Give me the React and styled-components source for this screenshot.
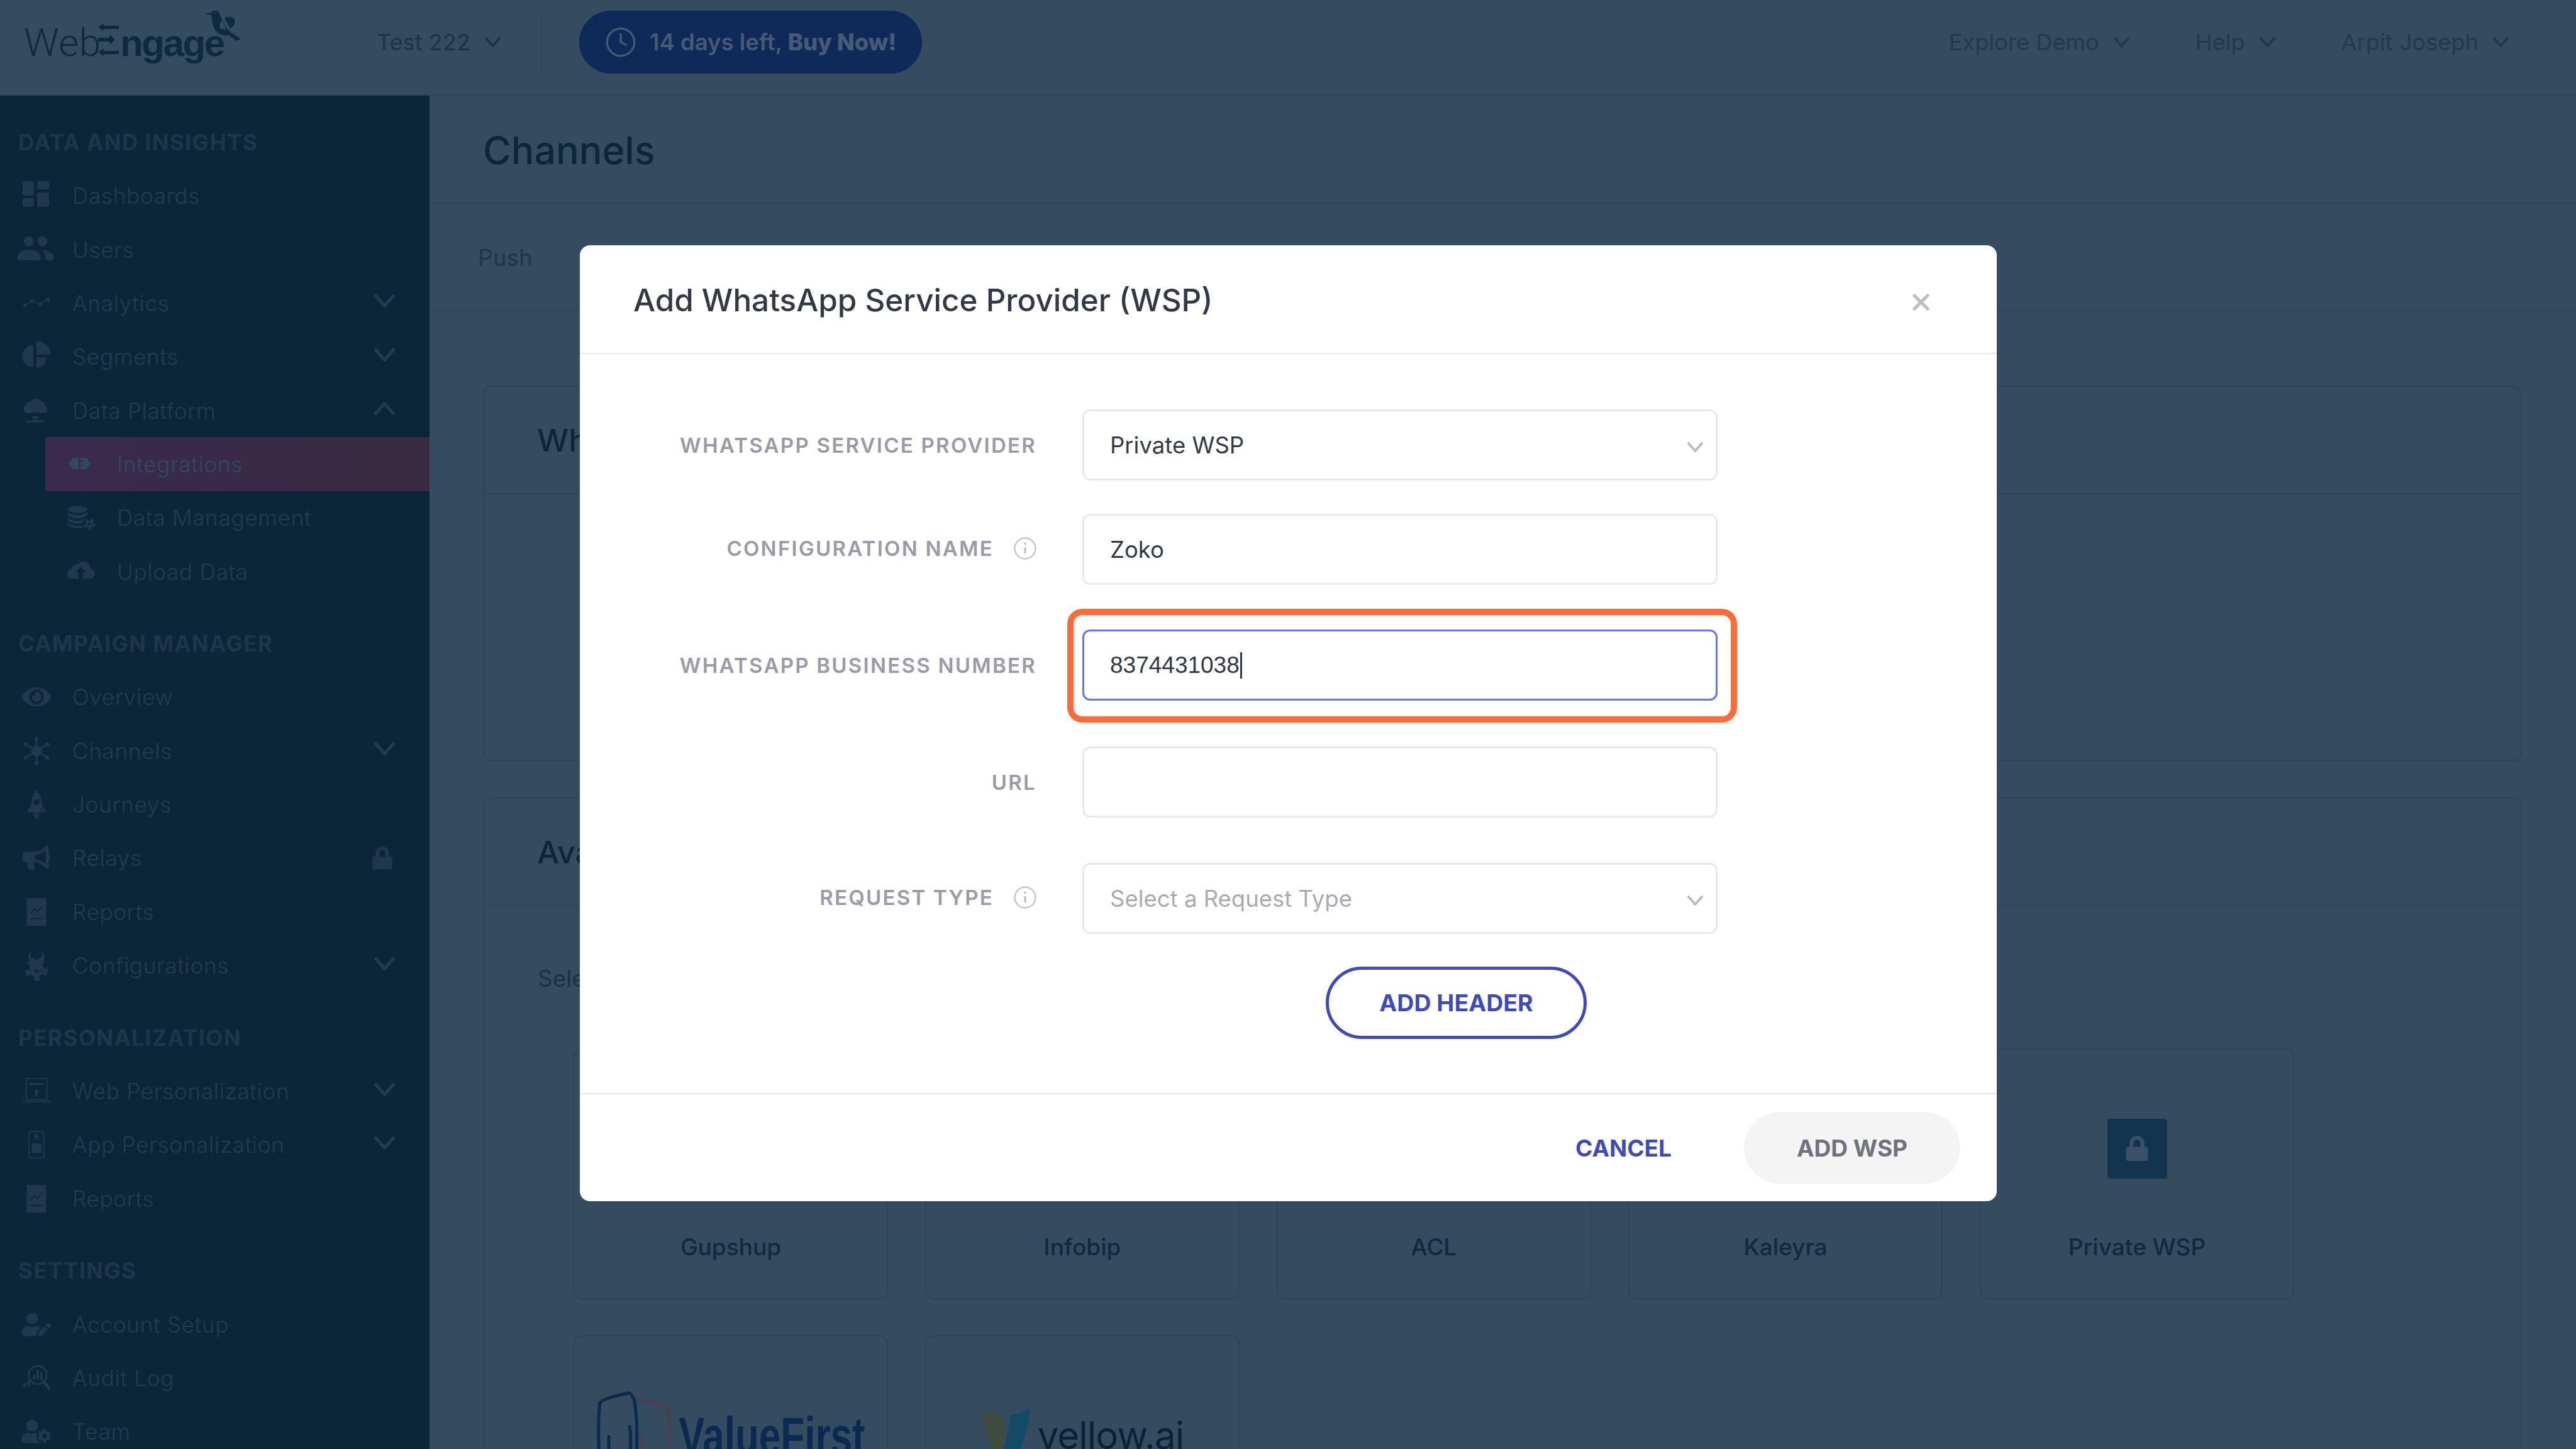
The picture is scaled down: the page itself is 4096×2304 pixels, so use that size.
import React from "react";
import styled, { createGlobalStyle } from "styled-components";
import { Clock } from "lucide-react";
import { FaBullhorn, FaEye, FaLock, FaUserCog, FaUserEdit } from "react-icons/fa";

const GlobalStyle = createGlobalStyle`
  html, body {
    margin: 0;
    padding: 0;
    background: #354b60;
    font-family: Inter, "Noto Sans", sans-serif;
  }
  * { box-sizing: border-box; }
`;

const Page = styled.div`
  position: relative;
  width: 4096px;
  height: 2304px;
  overflow: hidden;
  background: #354b60;
  display: flex;
  flex-direction: column;
`;

/* top bar */
const TopBar = styled.header`
  height: 152px;
  flex: none;
  display: flex;
  align-items: center;
  padding: 0 107px 16px 0;
  border-bottom: 2px solid #2f4458;
`;

const Logo = styled.div`
  position: relative;
  width: 599px;
  height: 152px;
  padding: 36px 0 0 38px;
  display: flex;
  align-items: baseline;
  align-self: flex-start;
  flex: none;
  color: #0e2a3e;
  line-height: 64px;
`;

const LogoLight = styled.span`
  width: 111px;
  font-family: Roboto, sans-serif;
  font-weight: 300;
  font-size: 62px;
  letter-spacing: 0.5px;
`;

const LogoBold = styled.span`
  font-family: "Liberation Sans", sans-serif;
  font-weight: 700;
  font-size: 60px;
  letter-spacing: -2.4px;
`;

const LogoArrows = styled.svg`
  width: 33px;
  height: 52px;
  margin: 0 2px -3px 7px;
`;

const LogoBird = styled.svg`
  position: absolute;
  left: 326px;
  top: 16px;
  width: 58px;
  height: 50px;
`;

const TopMenu = styled.div`
  display: flex;
  align-items: center;
  gap: 23px;
  font-size: 36px;
  letter-spacing: 0.1px;
  color: ${(p) => p.$color || "#24394e"};
  margin-left: ${(p) => p.$left || 0}px;
`;

const Divider = styled.div`
  width: 2px;
  height: 100px;
  background: #31465a;
  margin-left: 64px;
`;

const TrialPill = styled.div`
  height: 100px;
  width: 545px;
  margin-left: 59px;
  display: flex;
  align-items: center;
  gap: 20px;
  padding-left: 40px;
  border-radius: 50px;
  background: #0f2a59;
  color: #465a76;
  font-size: 36.5px;
  font-weight: 600;
  white-space: nowrap;
  b { font-weight: 800; }
`;

const Spacer = styled.div`
  flex: 1;
`;

const ChevronSvg = styled.svg`
  width: ${(p) => p.$w || 25}px;
  height: ${(p) => Math.round((p.$w || 25) * 0.64)}px;
  flex: none;
  fill: none;
  stroke: ${(p) => p.$color || "currentColor"};
  stroke-width: 4;
  stroke-linecap: round;
  stroke-linejoin: round;
`;

const Chevron = ({ up, w, color, className }) => (
  <ChevronSvg viewBox="0 0 25 16" $w={w} $color={color} className={className}>
    <polyline points={up ? "2,14 12.5,2 23,14" : "2,2 12.5,14 23,2"} />
  </ChevronSvg>
);

/* layout */
const Body = styled.div`
  flex: 1;
  display: flex;
  min-height: 0;
`;

const Sidebar = styled.nav`
  width: 683px;
  flex: none;
  padding-top: 2px;
  background: #0c2639;
  overflow: hidden;
`;

const NavSection = styled.div`
  margin-top: 29.6px;
`;

const NavTitle = styled.div`
  height: 85px;
  padding-left: 29px;
  display: flex;
  align-items: center;
  color: #1f354b;
  font-size: 35px;
  font-weight: 700;
  letter-spacing: 1.5px;
`;

const NavRow = styled.div`
  height: 85.33px;
  display: flex;
  align-items: center;
  margin-left: ${(p) => (p.$sub ? 72 : 0)}px;
  padding: 0 ${(p) => (p.$sub ? 0 : 55)}px 0 ${(p) => (p.$sub ? 34 : 35)}px;
  color: ${(p) => (p.$active ? "#2f4b62" : "#253a50")};
  background: ${(p) => (p.$active ? "linear-gradient(90deg, #3a2a4e, #382b42)" : "none")};
  font-size: 35px;
  font-weight: 300;
  letter-spacing: 0.75px;
`;

const NavIcon = styled.span`
  width: 46px;
  height: 46px;
  margin-right: 34px;
  flex: none;
  display: flex;
  align-items: center;
  justify-content: center;
  color: ${(p) => (p.$active ? "#2f4b62" : "#20374d")};
  svg { display: block; fill: currentColor; overflow: visible; }
`;

const NavEnd = styled.span`
  margin-left: auto;
  display: flex;
  color: #253a50;
  transform: translateY(-3px);
`;

const NavLock = styled.span`
  margin-left: auto;
  margin-right: 2px;
  display: flex;
  color: #20374d;
`;

const Gear = ({ cx, cy, r }) => (
  <>
    <circle cx={cx} cy={cy} r={r * 0.72} />
    <circle cx={cx} cy={cy} r={r * 0.9} fill="none" stroke="currentColor" strokeWidth={r * 0.4} strokeDasharray={`${r * 0.55} ${r * 0.55}`} />
    <circle cx={cx} cy={cy} r={r * 0.3} fill="#0c2639" />
  </>
);

const Icon48 = ({ children }) => (
  <svg viewBox="0 0 48 48" width="46" height="46">
    {children}
  </svg>
);

const Icon46 = ({ children }) => (
  <svg viewBox="0 0 46 46" width="46" height="46">
    {children}
  </svg>
);

const icons = {
  dashboard: (
    <Icon46>
      <rect x="1" y="0" width="18" height="23" rx="3" />
      <rect x="24" y="0" width="19" height="13" rx="3" />
      <rect x="1" y="27" width="18" height="14" rx="3" />
      <rect x="24" y="18" width="19" height="23" rx="3" />
    </Icon46>
  ),
  users: (
    <Icon46>
      <circle cx="10.7" cy="9.7" r="8" />
      <circle cx="32.3" cy="9.7" r="8" />
      <path d="M-8 36c0-8 9-13 19-13s19 5 19 13c0 2-2 4-4 4H-4c-2 0-4-2-4-4z" />
      <path d="M31 23c12 1 20 6 20 13 0 2-2 4-4 4h-8c-1 0-2-1-2-2 0-7-1-11-6-15z" />
    </Icon46>
  ),
  analytics: (
    <Icon46>
      <polyline points="5,26.3 15.5,20 28.8,24.6 41.5,17.3" fill="none" stroke="currentColor" strokeWidth="1.5" />
      <circle cx="5" cy="26.3" r="3" />
      <circle cx="15.5" cy="20" r="3" />
      <circle cx="28.8" cy="24.6" r="3" />
      <circle cx="41.5" cy="17.3" r="3" />
    </Icon46>
  ),
  segments: (
    <Icon46>
      <path d="M18 5a17.5 17.5 0 0 0 0 35z" />
      <path d="M23-2a22 22 0 0 1 22 22H23z" />
      <path d="M23 24.5h16a16 16 0 0 1-16 16z" />
    </Icon46>
  ),
  platform: (
    <Icon46>
      <path d="M8 27a7 7 0 0 1-2-13 7 7 0 0 1 9-5 9 9 0 0 1 16-1 8 8 0 0 1 6 8 6 6 0 0 1 0 11z" />
      <rect x="16.5" y="25.8" width="10.5" height="3" fill="#0c2639" />
      <rect x="15.5" y="32" width="11" height="3" />
      <rect x="20" y="35" width="3" height="5" />
      <rect x="6" y="38.5" width="30" height="3" rx="1.5" />
    </Icon46>
  ),
  integrations: (
    <Icon46>
      <path d="M-1 22l6-1c1-5 4-8 8-8h6v18h-6c-4 0-7-3-8-8l-6-1z" />
      <path d="M22 13h7c4 0 6 3 7 8l5 1-5 1c-1 5-3 8-7 8h-7v-5h5v-2h-5v-5h5v-2h-5z" />
    </Icon46>
  ),
  database: (
    <Icon46>
      <ellipse cx="17.3" cy="10" rx="15.7" ry="5.5" />
      <path d="M1.6 13.5c3 4 10 5.5 15.7 5.5s12.700-1.500 15.700-5.500v5c-3 4-10 5.500-15.700 5.500S4.600 22.500 1.600 18.500z" />
      <path d="M1.600 22.500c3 4 10 5.500 15.700 5.500 4 0 8-.5 11-2-1 1.500-1.500 3-1.500 5-3 1-6 1.500-9.500 1.500-5.700 0-12.700-1.500-15.700-5.500z" />
      <path d="M1.600 30.500c3 4 10 5.500 15.700 5.500 3 0 6-.5 9-1v4c-3 .7-6 1-9 1-5.700 0-12.700-1.500-15.700-5.500z" />
      <Gear cx={36.4} cy={33.6} r={8.3} />
    </Icon46>
  ),
  upload: (
    <Icon46>
      <path d="M8 34.600a8 8 0 0 1-1-15.800 9 9 0 0 1 11-7 11 11 0 0 1 20 6 8.500 8.500 0 0 1-1 16.800H26V24h5l-8.500-9L14 24h5v10.600z" />
    </Icon46>
  ),
  eye: <FaEye size={46} />,
  channels: (
    <Icon48>
      <circle cx="24" cy="24" r="9" />
      <g stroke="currentColor" strokeWidth="3">
        <line x1="24" y1="4" x2="24" y2="44" />
        <line x1="6" y1="13" x2="42" y2="35" />
        <line x1="6" y1="35" x2="42" y2="13" />
      </g>
      <circle cx="24" cy="4" r="3.5" />
      <circle cx="24" cy="44" r="3.5" />
      <circle cx="6" cy="13" r="3.5" />
      <circle cx="42" cy="13" r="3.5" />
      <circle cx="6" cy="35" r="3.5" />
      <circle cx="42" cy="35" r="3.5" />
    </Icon48>
  ),
  rocket: (
    <Icon48>
      <path fillRule="evenodd" d="M24 0c7 9 9 17 9 26l5 6v5h-8l-1 1H19l-1-1h-8v-5l5-6c0-9 2-17 9-26zm0 15a5 5 0 1 0 0 10 5 5 0 0 0 0-10z" />
      <path d="M18 40h12l-3 4v4h-6v-4z" />
    </Icon48>
  ),
  megaphone: <FaBullhorn size={44} />,
  reports: (
    <Icon48>
      <rect x="8" y="1" width="32" height="46" rx="1" />
      <polyline points="14,26 21,19 26,23 34,14" fill="none" stroke="#0c2639" strokeWidth="2" />
      <line x1="14" y1="35" x2="34" y2="35" stroke="#0c2639" strokeWidth="2" />
    </Icon48>
  ),
  config: (
    <Icon48>
      <Gear cx={24} cy={31} r={17} />
      <path d="M15 1v9l9 5 9-5V1c6 4 6 15-2 19v12H17V20C9 16 9 5 15 1z" />
    </Icon48>
  ),
  web: (
    <Icon48>
      <rect x="7" y="3" width="34" height="35" rx="1" fill="none" stroke="currentColor" strokeWidth="2" />
      <rect x="12" y="10" width="24" height="4" />
      <path d="M24 20l5 6h-3v7h-4v-7h-3z" />
      <rect x="1" y="40" width="46" height="2.5" />
    </Icon48>
  ),
  app: (
    <Icon48>
      <rect x="12" y="2" width="24" height="44" rx="3" fill="none" stroke="currentColor" strokeWidth="2" />
      <path d="M24 16l-5-6h3V6h4v4h3z" />
      <rect x="16" y="22" width="16" height="16" />
    </Icon48>
  ),
  account: <FaUserEdit size={46} />,
  audit: (
    <Icon48>
      <circle cx="26" cy="19" r="15" fill="none" stroke="currentColor" strokeWidth="3" />
      <rect x="18" y="18" width="4" height="9" />
      <rect x="24" y="11" width="4" height="16" />
      <rect x="30" y="15" width="4" height="12" />
      <rect x="2" y="32" width="4" height="7" />
      <rect x="9" y="28" width="4" height="11" />
      <line x1="36" y1="30" x2="45" y2="42" stroke="currentColor" strokeWidth="5" strokeLinecap="round" />
    </Icon48>
  ),
  team: <FaUserCog size={46} />,
};

const navData = [
  {
    title: "DATA AND INSIGHTS",
    rows: [
      { label: "Dashboards", icon: "dashboard" },
      { label: "Users", icon: "users" },
      { label: "Analytics", icon: "analytics", chevron: true },
      { label: "Segments", icon: "segments", chevron: true },
      { label: "Data Platform", icon: "platform", chevron: "up" },
      { label: "Integrations", icon: "integrations", sub: true, active: true },
      { label: "Data Management", icon: "database", sub: true },
      { label: "Upload Data", icon: "upload", sub: true },
    ],
  },
  {
    title: "CAMPAIGN MANAGER",
    rows: [
      { label: "Overview", icon: "eye" },
      { label: "Channels", icon: "channels", chevron: true },
      { label: "Journeys", icon: "rocket" },
      { label: "Relays", icon: "megaphone", locked: true },
      { label: "Reports", icon: "reports" },
      { label: "Configurations", icon: "config", chevron: true },
    ],
  },
  {
    title: "PERSONALIZATION",
    rows: [
      { label: "Web Personalization", icon: "web", chevron: true },
      { label: "App Personalization", icon: "app", chevron: true },
      { label: "Reports", icon: "reports" },
    ],
  },
  {
    title: "SETTINGS",
    rows: [
      { label: "Account Setup", icon: "account" },
      { label: "Audit Log", icon: "audit" },
      { label: "Team", icon: "team" },
    ],
  },
];

/* page behind the dialog */
const Main = styled.main`
  flex: 1;
  min-width: 0;
  display: flex;
  flex-direction: column;
`;

const TitleBar = styled.div`
  height: 172px;
  flex: none;
  padding: 3px 0 0 85px;
  display: flex;
  align-items: center;
  border-bottom: 2px solid #2f4458;
  color: #0c2739;
  font-size: 61px;
  font-weight: 500;
`;

const TabBar = styled.div`
  height: 171px;
  flex: none;
  padding: 2px 0 0 77px;
  display: flex;
  align-items: center;
  border-bottom: 2px solid #2f4458;
  color: #1f3549;
  font-size: 37px;
`;

const Content = styled.div`
  padding: 118px 86px 0 85px;
  display: flex;
  flex-direction: column;
  gap: 58px;
`;

const Card = styled.section`
  border: 2px solid #2f4458;
  border-radius: 14px;
  height: ${(p) => p.$h}px;
  flex: none;
`;

const CardHead = styled.div`
  height: 171px;
  padding-left: 84px;
  display: flex;
  align-items: center;
  border-bottom: 2px solid #2f4458;
  color: #0c2739;
  font-size: 50px;
  font-weight: 500;
`;

const CardHint = styled.div`
  padding: 92px 0 0 85px;
  height: 226px;
  color: #1b3246;
  font-size: 37px;
`;

const TileGrid = styled.div`
  margin-left: 142px;
  display: grid;
  grid-template-columns: repeat(5, 500px);
  column-gap: 59px;
  row-gap: 57px;
`;

const Tile = styled.div`
  height: 399px;
  border: 2px solid #2f4458;
  border-radius: 14px;
  display: flex;
  flex-direction: column;
  align-items: center;
  padding-top: 62px;
`;

const TileLogo = styled.div`
  height: 190px;
  display: flex;
  align-items: center;
  gap: 12px;
`;

const TileLabel = styled.div`
  margin-top: 39px;
  color: #12293d;
  font-size: 37px;
  font-weight: 500;
`;

const LockBox = styled.div`
  width: 95px;
  height: 95px;
  border-radius: 4px;
  background: #13344e;
  color: #3a5068;
  display: flex;
  align-items: center;
  justify-content: center;
`;

const ValueFirstName = styled.span`
  display: inline-block;
  font-family: "Liberation Sans", sans-serif;
  font-weight: 700;
  font-size: 62px;
  color: #0b2a52;
  transform: scaleY(1.35);
`;

const YellowName = styled.span`
  font-size: 60px;
  font-weight: 400;
  color: #0a2238;
  letter-spacing: -1px;
`;

const tiles = ["Gupshup", "Infobip", "ACL", "Kaleyra", "Private WSP"];

/* dialog */
const Dialog = styled.div`
  position: absolute;
  left: 922px;
  top: 390px;
  width: 2253px;
  height: 1520px;
  background: #fff;
  border-radius: 16px;
  display: flex;
  flex-direction: column;
`;

const DialogHead = styled.div`
  height: 173px;
  flex: none;
  padding: 3px 107px 0 85px;
  display: flex;
  align-items: center;
  justify-content: space-between;
  border-bottom: 2px solid #e8e8e9;
`;

const DialogTitle = styled.h2`
  margin: 0;
  font-size: 49.4px;
  font-weight: 500;
  color: #333847;
`;

const CloseIcon = styled.svg`
  width: 27px;
  height: 27px;
  margin-top: 6px;
  stroke: #bdbec2;
  stroke-width: 5;
  stroke-linecap: round;
  fill: none;
`;

const DialogBody = styled.div`
  flex: 1;
  padding-top: 88px;
`;

const FormRow = styled.div`
  display: grid;
  grid-template-columns: 726px 1010px;
  column-gap: 73px;
  align-items: center;
  margin-top: ${(p) => p.$gap || 0}px;
`;

const FieldLabel = styled.label`
  display: flex;
  justify-content: flex-end;
  align-items: center;
  gap: 32px;
  padding-bottom: ${(p) => (p.$raised ? 4 : 0)}px;
  color: #9a9ba6;
  font-size: 33px;
  font-weight: 600;
  letter-spacing: 2.25px;
`;

const InfoIcon = styled.svg`
  width: 36px;
  height: 36px;
  flex: none;
  fill: none;
  stroke: #b9bac0;
  stroke-width: 2;
`;

const Field = styled.div`
  position: relative;
  height: 113px;
  padding: 0 20px 0 41px;
  display: flex;
  align-items: center;
  justify-content: space-between;
  border: ${(p) => (p.$focused ? "3px solid #6a74df" : "3px solid #e9e9ea")};
  border-radius: 12px;
  color: ${(p) => (p.$placeholder ? "#a9abb0" : "#333847")};
  font-size: 36.5px;
`;

const FieldChevron = styled(Chevron)`
  transform: translateY(3px);
`;

const NumberText = styled.span`
  display: flex;
  align-items: center;
  font-family: "Liberation Sans", sans-serif;
  font-size: 37px;
`;

const Caret = styled.span`
  width: 3px;
  height: 42px;
  margin-left: 1px;
  background: #333847;
`;

const Highlight = styled.div`
  position: absolute;
  left: -27px;
  right: -34px;
  top: -36px;
  bottom: -38px;
  border: 10px solid #ff6a39;
  border-radius: 24px;
  pointer-events: none;
`;

const AddHeaderButton = styled.button`
  display: block;
  width: 415px;
  height: 115px;
  margin: 52px 0 0 1186px;
  background: #fff;
  border: 5px solid #3f4ab8;
  border-radius: 58px;
  color: #3f4ab8;
  font-family: inherit;
  font-size: 37.5px;
  font-weight: 700;
`;

const DialogFoot = styled.div`
  height: 172px;
  flex: none;
  padding-right: 58px;
  display: flex;
  align-items: center;
  justify-content: flex-end;
  gap: 115px;
  border-top: 2px solid #e8e8e9;
`;

const CancelButton = styled.button`
  padding: 0;
  background: none;
  border: 0;
  color: #3f4ab8;
  font-family: inherit;
  font-size: 37px;
  font-weight: 700;
`;

const SubmitButton = styled.button`
  width: 344px;
  height: 114px;
  background: #f4f4f5;
  border: 0;
  border-radius: 57px;
  color: #70727d;
  font-family: inherit;
  font-size: 37px;
  font-weight: 700;
`;

const Info = () => (
  <InfoIcon viewBox="0 0 36 36">
    <circle cx="18" cy="18" r="16.5" />
    <line x1="18" y1="16" x2="18" y2="26" strokeWidth="3" />
    <circle cx="18" cy="10.5" r="1.8" fill="#b9bac0" stroke="none" />
  </InfoIcon>
);

const App = () => {
  return (
    <Page>
      <GlobalStyle />
      <TopBar>
        <Logo>
          <LogoLight>Web</LogoLight>
          <LogoArrows viewBox="0 0 33 52" fill="#0e2a3e">
            <path d="M0 6l9-6v4h24v5H9v3z" />
            <path d="M27 26l-9-8v5H0v6h18v5z" />
            <path d="M0 46l9-6v4h24v5H9v3z" />
          </LogoArrows>
          <LogoBold>ngage</LogoBold>
          <LogoBird viewBox="0 0 58 50" fill="#0e2a3e">
            <path fillRule="evenodd" d="M0 6l10-2c2-4 10-4 12 0 4 8 6 14 10 21 4 7 12 13 25 21l-7 3-12-9c-12 2-20-4-24-12-3-8-3-16-4-20zm27 11c-5 5-5 11-1 13l8 1z" />
            <path d="M31 13c4-4 13-3 16 2 2 7-3 12-7 14z" />
            <circle cx="17" cy="5" r="1" fill="#354b60" />
          </LogoBird>
        </Logo>
        <TopMenu $color="#1c3348">
          Test 222 <Chevron />
        </TopMenu>
        <Divider />
        <TrialPill>
          <Clock size={52} strokeWidth={1.5} />
          <span>
            14 days left, <b>Buy Now!</b>
          </span>
        </TrialPill>
        <Spacer />
        <TopMenu>
          Explore Demo <Chevron />
        </TopMenu>
        <TopMenu $left={105}>
          Help <Chevron />
        </TopMenu>
        <TopMenu $left={105}>
          Arpit Joseph <Chevron />
        </TopMenu>
      </TopBar>
      <Body>
        <Sidebar>
          {navData.map((section) => (
            <NavSection key={section.title}>
              <NavTitle>{section.title}</NavTitle>
              {section.rows.map((row) => (
                <NavRow key={row.label} $sub={row.sub} $active={row.active}>
                  <NavIcon $active={row.active}>{icons[row.icon]}</NavIcon>
                  {row.label}
                  {row.chevron && (
                    <NavEnd>
                      <Chevron up={row.chevron === "up"} w={33} />
                    </NavEnd>
                  )}
                  {row.locked && (
                    <NavLock>
                      <FaLock size={36} />
                    </NavLock>
                  )}
                </NavRow>
              ))}
            </NavSection>
          ))}
        </Sidebar>
        <Main>
          <TitleBar>Channels</TitleBar>
          <TabBar>Push</TabBar>
          <Content>
            <Card $h={597}>
              <CardHead>WhatsApp</CardHead>
            </Card>
            <Card $h={1200}>
              <CardHead>Available</CardHead>
              <CardHint>Select</CardHint>
              <TileGrid>
                {tiles.map((name) => (
                  <Tile key={name}>
                    <TileLogo>
                      {name === "Private WSP" && (
                        <LockBox>
                          <FaLock size={40} />
                        </LockBox>
                      )}
                    </TileLogo>
                    <TileLabel>{name}</TileLabel>
                  </Tile>
                ))}
                <Tile>
                  <TileLogo>
                    <svg width="119" height="140" viewBox="0 0 119 140" fill="none" strokeWidth="5">
                      <path d="M53 3C35 6 12 12 6 18 3 40 3 70 5 110c3 25 45 30 57 15 4-35 4-85-2-112-2-5-4-8-7-10z" stroke="#0b2a52" />
                      <path d="M53 54c3 20 2 40-1 56-7 15-30 15-32 0V70" stroke="#0b2a52" />
                      <path d="M65 13c15 3 40 9 49 15 4 22 4 52 2 92-6 10-36 12-46 8" stroke="#4a3f4c" />
                      <path d="M74 70c-3 15-3 30-1 45" stroke="#4a3f4c" />
                    </svg>
                    <ValueFirstName>ValueFirst</ValueFirstName>
                  </TileLogo>
                </Tile>
                <Tile>
                  <TileLogo>
                    <svg width="78" height="90" viewBox="0 0 78 90">
                      <path d="M0 4c10 6 20 8 30 6 4 8 8 20 10 34L26 90C14 60 4 34 0 4z" fill="#3e4d3e" />
                      <path d="M78 2c-2 30-12 60-26 88H26C38 62 46 30 46 12c12 0 24-4 32-10z" fill="#134a66" />
                    </svg>
                    <YellowName>yellow.ai</YellowName>
                  </TileLogo>
                </Tile>
              </TileGrid>
            </Card>
          </Content>
        </Main>
      </Body>
      <Dialog>
        <DialogHead>
          <DialogTitle>Add WhatsApp Service Provider (WSP)</DialogTitle>
          <CloseIcon viewBox="0 0 27 27">
            <line x1="3" y1="3" x2="24" y2="24" />
            <line x1="24" y1="3" x2="3" y2="24" />
          </CloseIcon>
        </DialogHead>
        <DialogBody>
          <FormRow>
            <FieldLabel>WHATSAPP SERVICE PROVIDER</FieldLabel>
            <Field>
              Private WSP <FieldChevron color="#bbbcc0" />
            </Field>
          </FormRow>
          <FormRow $gap={53}>
            <FieldLabel $raised>
              CONFIGURATION NAME <Info />
            </FieldLabel>
            <Field>Zoko</Field>
          </FormRow>
          <FormRow $gap={71}>
            <FieldLabel>WHATSAPP BUSINESS NUMBER</FieldLabel>
            <Field $focused>
              <NumberText>
                8374431038
                <Caret />
              </NumberText>
              <Highlight />
            </Field>
          </FormRow>
          <FormRow $gap={73}>
            <FieldLabel>URL</FieldLabel>
            <Field />
          </FormRow>
          <FormRow $gap={72}>
            <FieldLabel $raised>
              REQUEST TYPE <Info />
            </FieldLabel>
            <Field $placeholder>
              Select a Request Type <FieldChevron color="#bbbcc0" />
            </Field>
          </FormRow>
          <AddHeaderButton>ADD HEADER</AddHeaderButton>
        </DialogBody>
        <DialogFoot>
          <CancelButton>CANCEL</CancelButton>
          <SubmitButton>ADD WSP</SubmitButton>
        </DialogFoot>
      </Dialog>
    </Page>
  );
};

export default App;
